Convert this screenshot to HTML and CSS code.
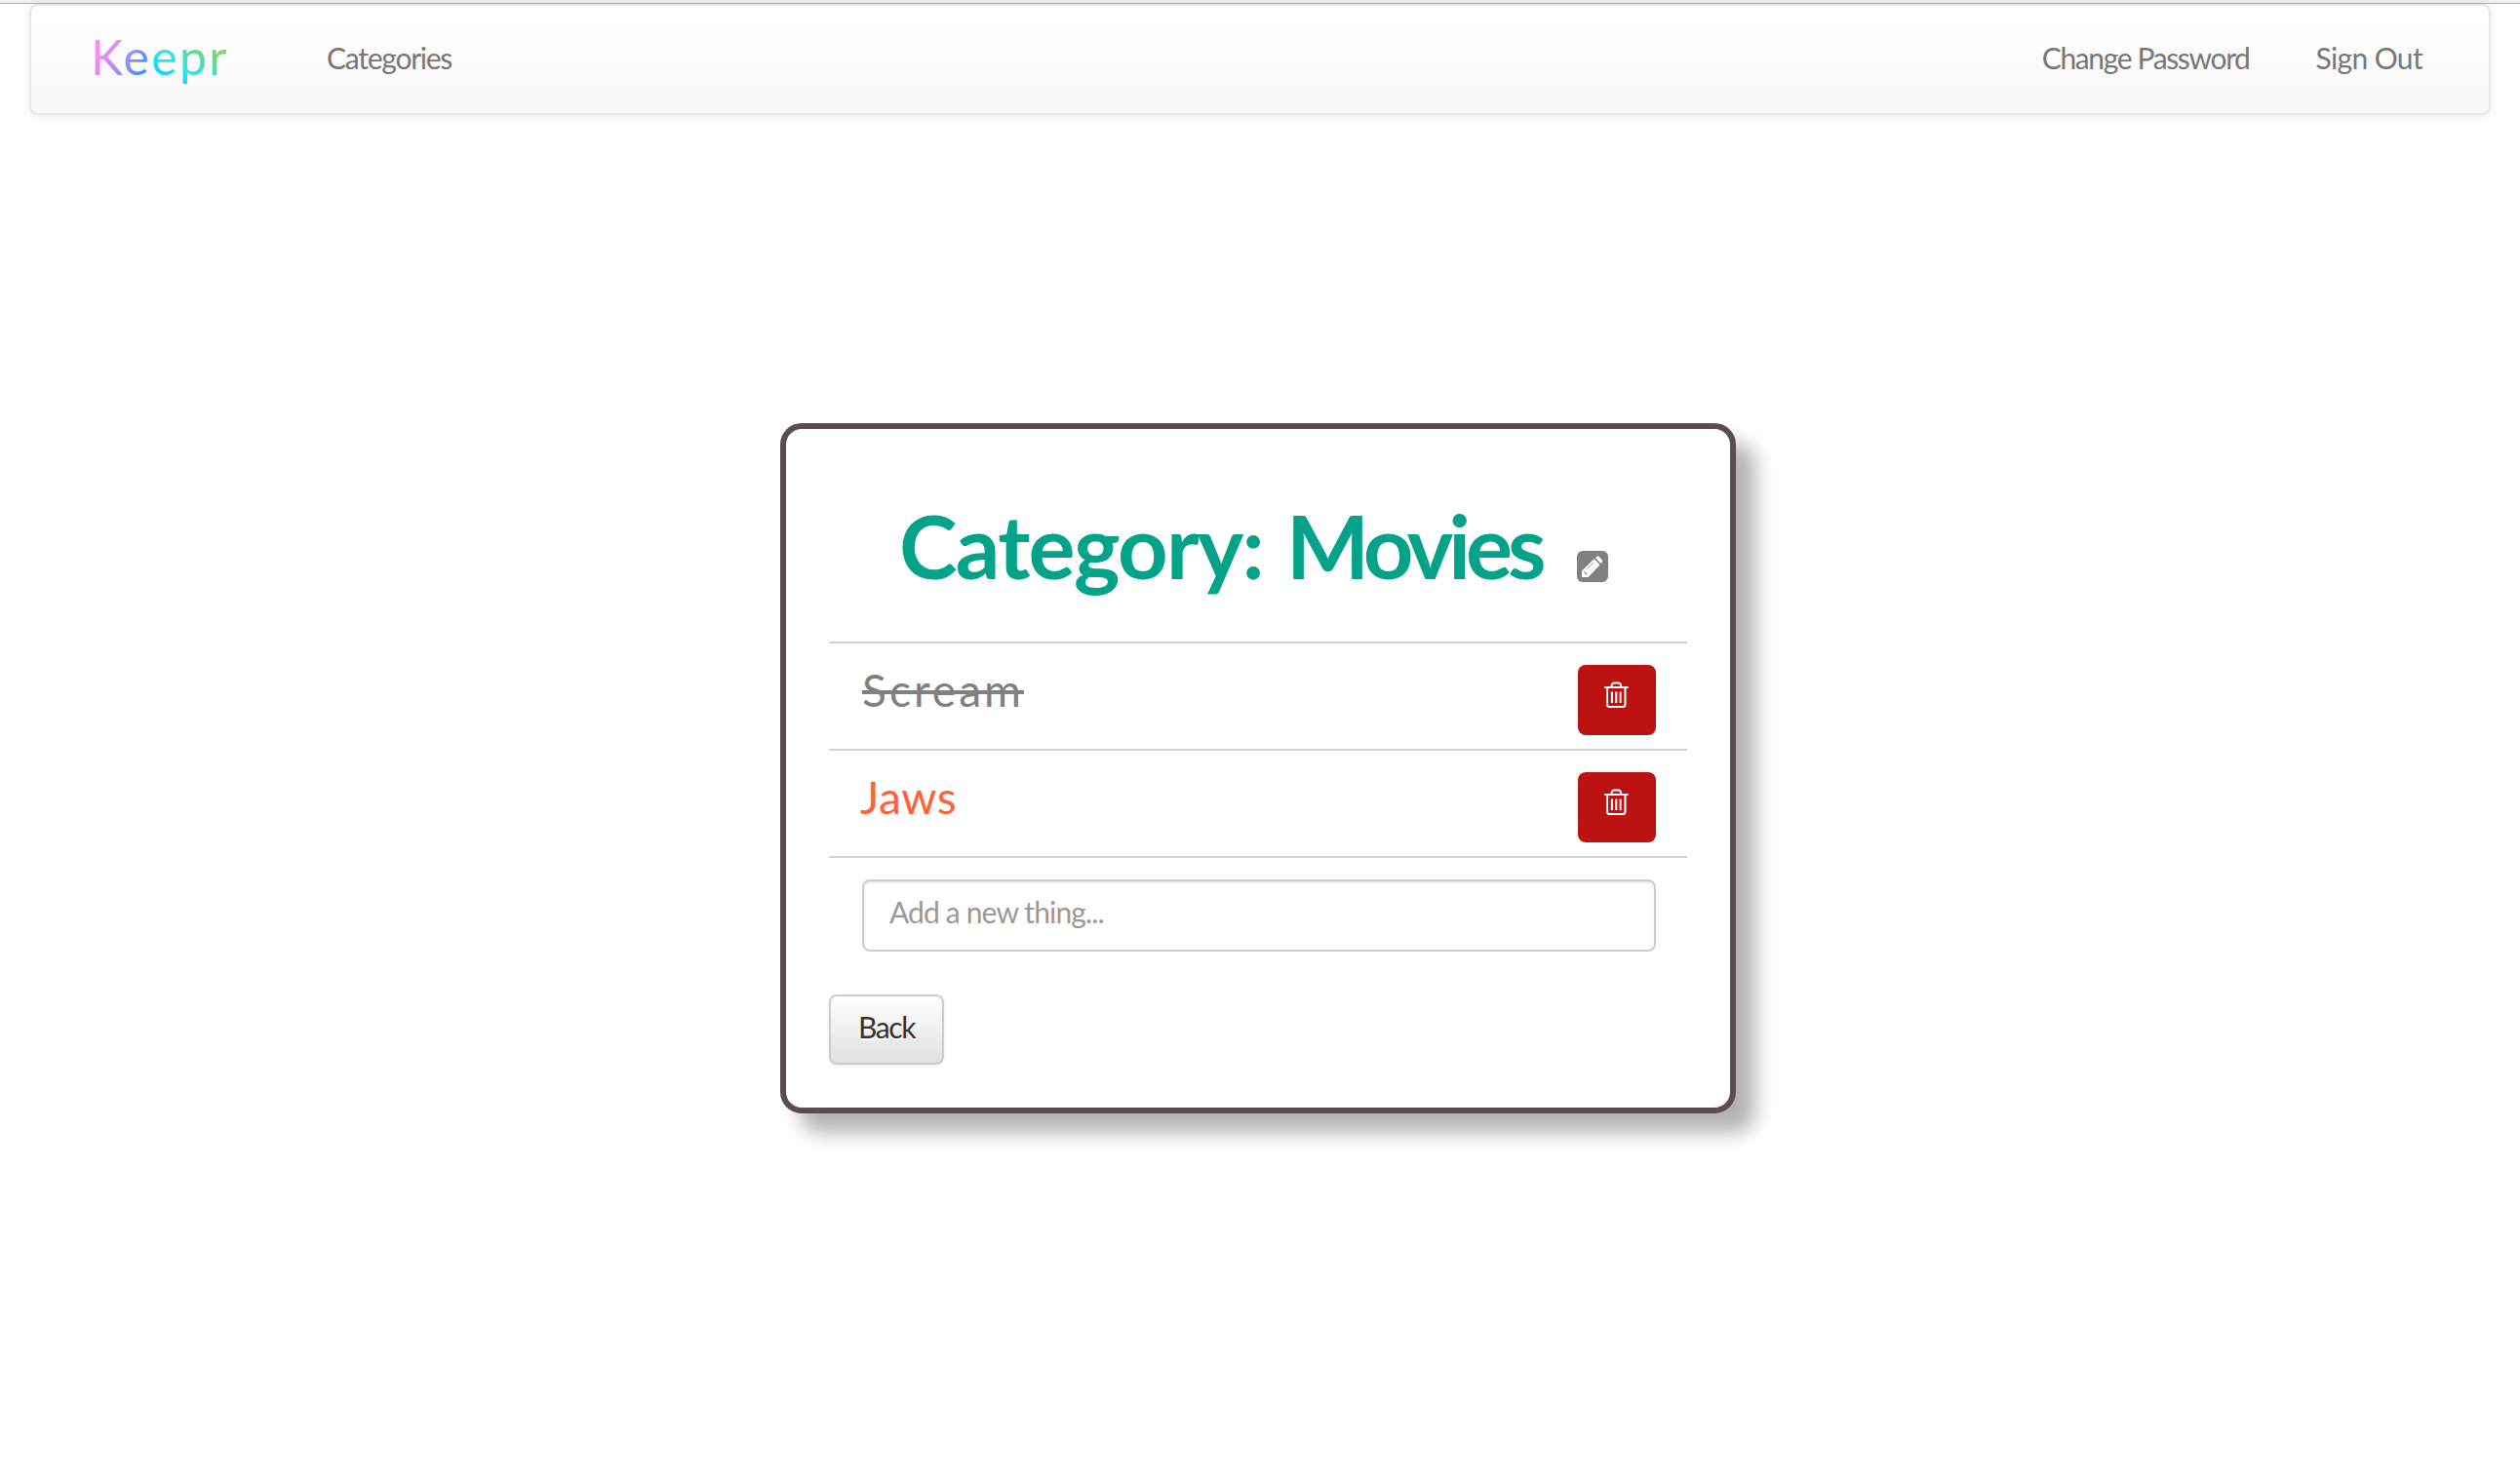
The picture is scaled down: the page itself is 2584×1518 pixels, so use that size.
FILE: index.html
```html
<!DOCTYPE html>
<html lang="en">
<head>
<meta charset="utf-8">
<title>Keepr</title>
<link rel="stylesheet" href="styles.css">
</head>
<body>
<div class="window-edge"></div>
<nav class="navbar">
  <a class="brand">Keepr</a>
  <a class="nav-link categories">Categories</a>
  <a class="nav-link password">Change Password</a>
  <a class="nav-link signout">Sign Out</a>
</nav>
<main class="card">
  <h1 class="title">
    <span class="label">Category:</span>
    <span class="name">Movies</span>
    <svg class="edit" viewBox="0 0 32 32" width="32" height="32">
      <rect width="32" height="32" rx="6" fill="#808080"/>
      <path d="M5 27V20.5L17 8.7Q17.6 8.2 18.2 8.8L23 13.8Q23.4 14.4 22.9 14.9L11.5 27Z" fill="#fff"/>
      <path d="M19 7.2L20.6 5.7Q21.4 5 22.3 5.8L25.9 9.5Q26.6 10.3 25.9 11.3L24.4 13Z" fill="#fff"/>
      <path d="M10.3 18.3L17.3 11.6" stroke="#808080" stroke-width=".8"/>
      <path d="M7.2 21.8L8.5 22.2L10.2 24.4" stroke="#808080" stroke-width="1.2" fill="none"/>
    </svg>
  </h1>
  <ul class="things">
    <li class="thing">
      <span class="text done">Scream</span>
      <button class="delete" aria-label="Delete">
        <svg viewBox="0 0 25 28" width="25" height="28" fill="none" stroke="#fff" stroke-width="2">
          <path d="M0 6H24.5M7.4 5.6C7.6 2.8 8.6 1.6 10.2 1.6H14.5C16.1 1.6 17.1 2.8 17.3 5.6M3 6V23.5Q3 26 5.5 26H19Q21.5 26 21.5 23.5V6"/>
          <path d="M7.9 10.5V22M12.3 10.5V22M16.6 10.5V22"/>
        </svg>
      </button>
    </li>
    <li class="thing">
      <span class="text open">Jaws</span>
      <button class="delete" aria-label="Delete">
        <svg viewBox="0 0 25 28" width="25" height="28" fill="none" stroke="#fff" stroke-width="2">
          <path d="M0 6H24.5M7.4 5.6C7.6 2.8 8.6 1.6 10.2 1.6H14.5C16.1 1.6 17.1 2.8 17.3 5.6M3 6V23.5Q3 26 5.5 26H19Q21.5 26 21.5 23.5V6"/>
          <path d="M7.9 10.5V22M12.3 10.5V22M16.6 10.5V22"/>
        </svg>
      </button>
    </li>
    <li class="thing new">
      <input class="add" type="text" placeholder="Add a new thing...">
    </li>
  </ul>
  <button class="back">Back</button>
</main>
</body>
</html>
```
FILE: styles.css
```css
* { box-sizing: border-box; }

body {
  min-height: 100vh;
  margin: 0;
  background: #fff;
  font-family: Lato, "Liberation Sans", sans-serif;
  font-size: 30px;
}

.window-edge {
  height: 4px;
  background: #efefef;
  border-bottom: 1px solid #b0b0b0;
}

.navbar {
  display: flex;
  align-items: center;
  height: 114px;
  margin: 0 30px;
  padding: 0 68px 5px 61px;
  border: 2px solid #e7e7e7;
  border-radius: 8px;
  background: linear-gradient(#fff, #f8f8f8);
  box-shadow: 0 2px 10px rgba(0, 0, 0, .075);
}

.brand {
  width: 150px;
  line-height: 60px;
  font-size: 50px;
  font-weight: 400;
  letter-spacing: 2.3px;
  white-space: nowrap;
  color: transparent;
  background:
    linear-gradient(125deg, #ff8cf0 25%, #a58cff 55%, #3f92ff 82%) 0 0 / 63px 100% no-repeat,
    linear-gradient(28deg, #12d4ff 15%, #22e6f5 30%, #5cdb95 54%, #98d05e 72%) 63px 0 / 87px 100% no-repeat;
  -webkit-background-clip: text;
  background-clip: text;
  margin-bottom: 2px;
}

.nav-link {
  color: #777;
  white-space: nowrap;
  text-shadow: 0 2px 0 rgba(255, 255, 255, .25);
}

.categories {
  margin-left: 92px;
  letter-spacing: -1.25px;
}

.password {
  margin-left: auto;
  letter-spacing: -1.36px;
}

.signout {
  margin-left: 68px;
  letter-spacing: -.65px;
}

.card {
  width: 980px;
  height: 708px;
  margin: 316px 0 0 800px;
  padding: 0 44px;
  border: 6px solid #5c4b51;
  border-radius: 22px;
  background: #fff;
  box-shadow: 20px 20px 20px rgba(0, 0, 0, .3);
}

.title {
  display: flex;
  height: 218px;
  margin: 0;
  padding: 20px 0 0 72px;
  font-size: 90px;
  line-height: 198px;
  font-weight: 700;
  color: #02a388;
}

.label { letter-spacing: -1.7px; }

.name {
  margin-left: 24px;
  letter-spacing: -5.1px;
}

.edit {
  margin: 105px 0 0 37px;
}

.things {
  margin: 0;
  padding: 0;
  list-style: none;
}

.thing {
  display: flex;
  justify-content: space-between;
  align-items: flex-start;
  height: 110px;
  padding: 22px 32px 0 34px;
  border-top: 2px solid #d6cfd1;
}

.text {
  font-size: 46px;
  line-height: 52px;
}

.done {
  color: #808080;
  letter-spacing: 3.07px;
  text-decoration: line-through;
  text-decoration-thickness: 4px;
}

.open {
  color: #ff6138;
  letter-spacing: .5px;
  margin-left: -2px;
}

.delete {
  display: flex;
  justify-content: center;
  width: 80px;
  height: 72px;
  padding: 17px 1px 0 0;
  border: 0;
  border-radius: 8px;
  background: #bd1212;
}

.new { height: 98px; }

.add {
  width: 814px;
  height: 74px;
  padding: 0 26px 9px;
  border: 2px solid #ccc;
  border-radius: 8px;
  background: #fff;
  box-shadow: inset 0 2px 2px rgba(0, 0, 0, .075);
  font: inherit;
  letter-spacing: -.86px;
}

.add::placeholder {
  color: #999;
  opacity: 1;
}

.back {
  display: block;
  width: 118px;
  height: 72px;
  margin-top: 44px;
  padding: 0 0 7px 28px;
  border: 2px solid #ccc;
  border-radius: 8px;
  background: linear-gradient(#fff, #e0e0e0);
  box-shadow: 0 2px 4px rgba(0, 0, 0, .075);
  font: inherit;
  letter-spacing: -1.4px;
  text-align: left;
  color: #333;
  text-shadow: 0 2px 0 #fff;
}
```
